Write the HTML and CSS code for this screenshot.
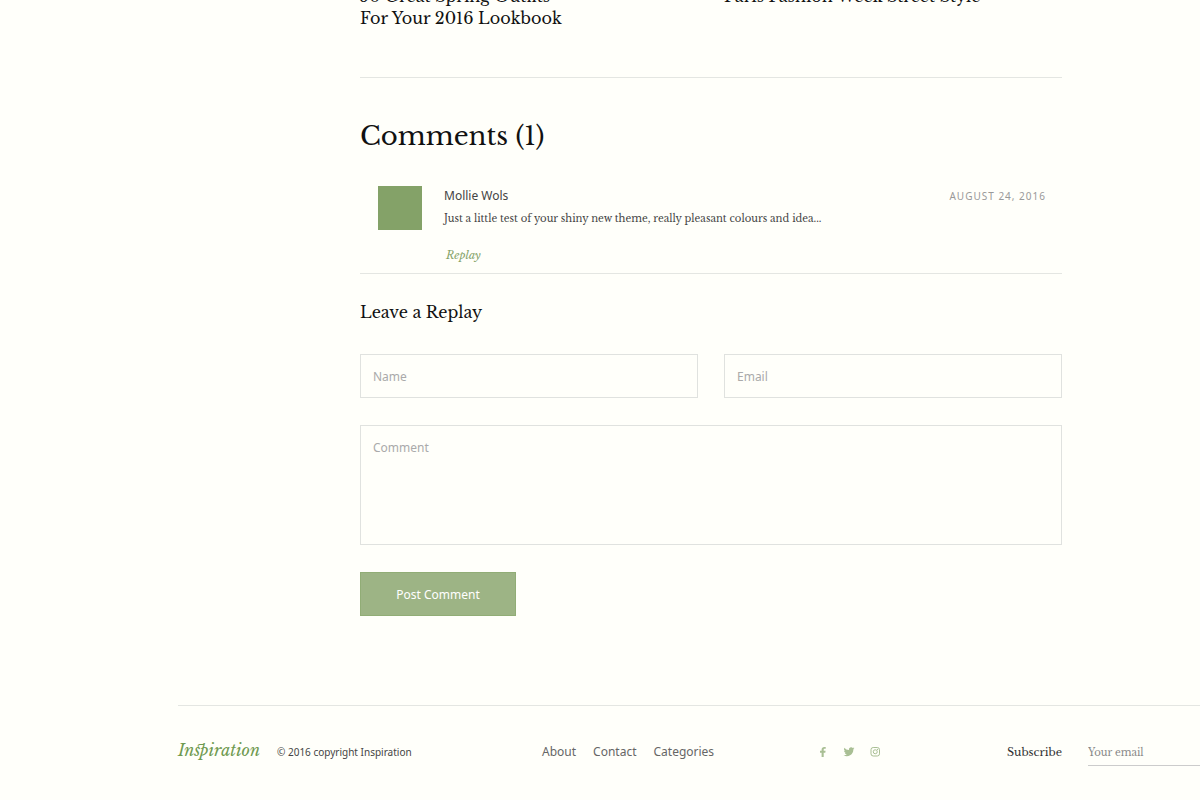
FILE: index.html
```html
<!DOCTYPE html>
<html lang="en">
<head>
  <meta charset="UTF-8" />
  <meta name="viewport" content="width=device-width, initial-scale=1" />
  <title>Inspiration</title>
  <link rel="stylesheet" href="styles.css">
</head>
<body>
  <main class="post">
    <section class="related">
      <h3>50 Great Spring Outfits<br>For Your 2016 Lookbook</h3>
      <h3>Paris Fashion Week Street Style</h3>
    </section>

    <section class="comments">
      <h1>Comments (1)</h1>
      <article class="comment">
        <div class="avatar"></div>
        <div class="comment-body">
          <div class="comment-head">
            <span class="author">Mollie Wols</span>
            <time class="date" datetime="2016-08-24">AUGUST 24, 2016</time>
          </div>
          <p>Just a little test of your shiny new theme, really pleasant colours and idea...</p>
          <a href="#reply" class="reply-link">Replay</a>
        </div>
      </article>
    </section>

    <form class="reply-form" id="reply">
      <h2>Leave a Replay</h2>
      <div class="form-row">
        <input type="text" name="name" placeholder="Name" aria-label="Name" />
        <input type="email" name="email" placeholder="Email" aria-label="Email" />
      </div>
      <textarea name="comment" placeholder="Comment" aria-label="Comment"></textarea>
      <button type="submit">Post Comment</button>
    </form>
  </main>

  <footer class="footer">
    <div class="brand">
      <a href="#" class="logo">Inspiration</a>
      <span class="copyright">© 2016 copyright Inspiration</span>
    </div>
    <nav class="footer-nav">
      <a href="#">About</a>
      <a href="#">Contact</a>
      <a href="#">Categories</a>
    </nav>
    <div class="social">
      <a href="#" aria-label="Facebook">
        <svg viewBox="0 0 12 12" width="12" height="12"><path fill="currentColor" d="M4.600 11V6.700H3V4.700h1.600V3.500C4.600 1.700 5.700.900 7.200.900c.7 0 1.300.1 1.500.1v1.800H7.700c-.8 0-1 .4-1 1v.9h1.900l-.3 2H6.700V11z"/></svg>
      </a>
      <a href="#" aria-label="Twitter">
        <svg viewBox="0 0 24 24" width="12" height="12"><path fill="currentColor" d="M23 4.600a10 10 0 0 1-2.500.8 5 5 0 0 0 1.900-2.500 10 10 0 0 1-2.800 1.100 4.500 4.500 0 0 0-7.700 4.100A13 13 0 0 1 2.600 3.400a4.500 4.500 0 0 0 1.400 6 5 5 0 0 1-2-.6 4.500 4.500 0 0 0 3.600 4.500 5 5 0 0 1-2 .1 4.500 4.500 0 0 0 4.200 3.100A9 9 0 0 1 1 18.300 13 13 0 0 0 20.700 6.900 10 10 0 0 0 23 4.600z"/></svg>
      </a>
      <a href="#" aria-label="Instagram">
        <svg viewBox="0 0 12 12" width="12" height="12" fill="none" stroke="currentColor"><rect x="2" y="1.500" width="8.500" height="8.500" rx="2.200"/><circle cx="6.250" cy="5.750" r="2"/><circle cx="8.600" cy="3.400" r=".6" fill="currentColor" stroke="none"/></svg>
      </a>
    </div>
    <form class="subscribe">
      <label for="subscribeEmail">Subscribe</label>
      <input type="email" id="subscribeEmail" placeholder="Your email" />
    </form>
  </footer>
</body>
</html>
```

FILE: styles.css
```css
* {
  box-sizing: border-box;
}

body {
  margin: 0;
  background: #fffffa;
  color: #111;
  font-family: "Libre Baskerville", "Liberation Serif", serif;
  overflow-x: hidden;
}

h1, h2, h3, p {
  margin: 0;
  font-weight: normal;
}

a {
  color: inherit;
  text-decoration: none;
}

input, textarea, button {
  font-family: "Noto Sans", sans-serif;
  font-size: 12px;
  border-radius: 0;
  outline: none;
}

.post {
  width: 60%;
  max-width: 702px;
  margin-left: 30%;
}

/* related posts */
.related {
  display: grid;
  grid-template-columns: 1fr 1fr;
  gap: 26px;
  margin-top: -15px;
  padding-bottom: 48px;
  border-bottom: 1px solid #e4e6e2;
}

.related h3 {
  font-size: 16px;
  line-height: 22px;
}

/* comments */
.comments h1 {
  padding: 38px 0 30px;
  font-size: 26px;
  line-height: 40px;
}

.comment {
  display: flex;
  gap: 22px;
  padding: 0 16px 8px 18px;
  border-bottom: 1px solid #e4e6e2;
}

.avatar {
  width: 44px;
  height: 44px;
  background: #84a268;
}

.comment-body {
  flex: 1;
}

.comment-head {
  display: flex;
  justify-content: space-between;
  font-family: "Noto Sans", sans-serif;
  line-height: 20px;
}

.author {
  font-size: 12px;
  color: #444;
}

.date {
  font-size: 10px;
  letter-spacing: 1px;
  color: #999;
}

.comment p {
  margin: 3px 0 16px;
  font-size: 10px;
  line-height: 20px;
  color: #444;
}

.reply-link {
  display: block;
  margin-left: 2px;
  font-size: 11px;
  line-height: 20px;
  font-style: italic;
  color: #84a268;
}

/* reply form */
.reply-form h2 {
  padding: 25px 0 29px;
  font-size: 16px;
  line-height: 26px;
}

.form-row {
  display: grid;
  grid-template-columns: 1fr 1fr;
  gap: 26px;
  margin-bottom: 27px;
}

.form-row input,
.reply-form textarea {
  width: 100%;
  height: 44px;
  padding: 0 12px;
  border: 1px solid #e0e2df;
  background: transparent;
}

.reply-form textarea {
  display: block;
  height: 120px;
  margin-bottom: 27px;
  padding: 12px;
  line-height: 20px;
  resize: none;
}

.reply-form ::placeholder {
  color: #aaa;
  opacity: 1;
}

.reply-form button {
  width: 156px;
  height: 44px;
  border: 1px solid #91ad76;
  background: #9db485;
  color: #fff;
  cursor: pointer;
}

/* footer */
.footer {
  display: flex;
  align-items: baseline;
  margin: 89px 0 0 178px;
  padding: 32px 0;
  border-top: 1px solid #e4e6e2;
  font-family: "Noto Sans", sans-serif;
}

.brand {
  flex: 0 0 364px;
  display: flex;
  align-items: baseline;
  gap: 17px;
}

.logo {
  font-family: "Libre Baskerville", "Liberation Serif", serif;
  font-size: 16px;
  line-height: 24px;
  font-style: italic;
  font-variant-ligatures: discretionary-ligatures;
  color: #6f9a50;
}

.copyright {
  font-size: 10px;
  color: #444;
}

.footer-nav {
  flex: 0 0 275px;
  display: flex;
  gap: 17px;
  font-size: 12px;
  color: #666;
}

.social {
  flex: 1;
  align-self: center;
  display: flex;
  gap: 14px;
  color: #a9bf94;
}

.social svg {
  display: block;
}

.subscribe {
  display: flex;
  align-items: baseline;
  gap: 26px;
  font-family: "Libre Baskerville", "Liberation Serif", serif;
  font-size: 11px;
  color: #333;
}

.subscribe input {
  width: 112px;
  height: 26px;
  padding: 0;
  border: 0;
  border-bottom: 1px solid #ccc;
  background: transparent;
  font-family: inherit;
  font-size: 10px;
}

.subscribe ::placeholder {
  color: #888;
  opacity: 1;
}
```
